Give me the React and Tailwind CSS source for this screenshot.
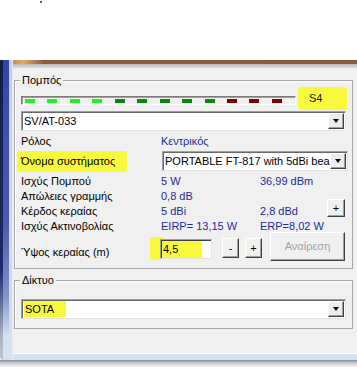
import React from 'react';

const dashColors = [
  'bg-[#22f022]', 'bg-[#22f022]', 'bg-[#22f022]', 'bg-[#22f022]',
  'bg-[#0b860b]', 'bg-[#0b860b]', 'bg-[#0b860b]', 'bg-[#0b860b]', 'bg-[#0b860b]',
  'bg-[#850000]', 'bg-[#850000]', 'bg-[#850000]',
];

const DropBtn = () => (
  <div className="w-[16px] h-[16px] shrink-0 bg-[#ededed] border border-t-white border-l-white border-b-[#404040] border-r-[#404040] shadow-[inset_-1px_-1px_0_#a0a0a0] flex items-center justify-center">
    <div className="w-0 h-0 border-l-[3.5px] border-r-[3.5px] border-t-[4px] border-l-transparent border-r-transparent border-t-black" />
  </div>
);

const Combo = ({ children, className = '' }) => (
  <div className={`h-[20px] bg-white border border-t-[#a0a0a0] border-l-[#a0a0a0] border-r-[#e3e3e3] border-b-[#e3e3e3] shadow-[inset_1px_1px_0_#696969] flex items-center pl-[2px] pr-[1px] ${className}`}>
    <div className="flex-1 min-w-0 overflow-hidden whitespace-nowrap h-[16px] flex items-center">{children}</div>
    <DropBtn />
  </div>
);

const Btn = ({ children, className = '' }) => (
  <div className={`bg-[#f0f0f0] border border-t-white border-l-white border-b-[#404040] border-r-[#404040] shadow-[inset_-1px_-1px_0_#a0a0a0] flex items-center justify-center ${className}`}>
    {children}
  </div>
);

const Row = ({ label, v1, v2, children, className = '' }) => (
  <div className={`flex items-start h-[15px] leading-[15px] ${className}`}>
    <div className="w-[140px] shrink-0">{label}</div>
    <div className="w-[99px] shrink-0 text-[#1c2a9c]">{v1}</div>
    <div className="text-[#1c2a9c]">{v2}</div>
    {children}
  </div>
);

const GroupLabel = ({ children }) => (
  <div className="absolute left-[5px] top-[-8px] px-[2px] bg-[#f0f0f0] leading-[15px]">{children}</div>
);

export default function App() {
  return (
    <div className="w-[357px] h-[367px] bg-white overflow-hidden font-['Liberation_Sans',Arial,sans-serif] text-[11px] text-black">
      <div className="h-[60px] relative">
        <div className="absolute left-[40px] top-[1px] w-[2px] h-[2px] bg-[#4a5aa8]" />
      </div>

      <div className="flex h-[300px]">
        <div className="w-[13px] shrink-0 flex">
          <div className="w-[3px] bg-[linear-gradient(to_bottom,#141c4a_0%,#1c2a6a_70%,#a8b4c2_92%,#c0c6cc_100%)] rounded-bl-[4px]" />
          <div className="w-[6px] bg-[linear-gradient(to_bottom,#3446a0_0%,#4a5cb0_55%,#7d92c8_78%,#d2e1f3_92%,#d2e1f3_100%)]" />
          <div className="w-[3px] bg-[linear-gradient(to_bottom,#c4ccd8_0%,#d8e0ea_100%)]" />
          <div className="w-[1px] bg-[#e8edf3]" />
        </div>

        <div className="flex-1 flex flex-col">
          <div className="h-[4px] bg-[linear-gradient(to_right,#c98a48_0%,#e3a865_3%,#8d5a3e_9%,#8b5a3c_100%)]" />
          <div className="h-[4px] bg-[linear-gradient(to_bottom,#b8b8b8,#dcdcdc)]" />

          <div className="flex-1 bg-[#f0f0f0] pl-[1px] pt-[12px]">
            {/* Πομπός */}
            <div className="relative w-[339px] h-[189px] border border-[#a8a8a8] shadow-[inset_1px_1px_0_#ffffff] pl-[6px] pr-[6px] pt-[6px]">
              <GroupLabel>Πομπός</GroupLabel>

              <div className="flex items-start h-[23px] gap-[2px]">
                <div className="w-[275px] h-[9px] mt-[9px] shrink-0 bg-[#f0f0f0] border border-t-[#7a7a7a] border-l-[#7a7a7a] border-b-white border-r-white shadow-[inset_1px_1px_0_#a0a0a0] flex items-center pl-[3px] gap-[12.45px]">
                  {dashColors.map((c, i) => (
                    <div key={i} className={`w-[10px] h-[4px] shrink-0 ${c}`} />
                  ))}
                </div>
                <div className="w-[49px] h-[23px] shrink-0 bg-[#f8f83c] rounded-[3px] pl-[11px] flex items-center text-[#10103a]">S4</div>
              </div>

              <Combo className="mt-[1px]">
                <span>SV/AT-033</span>
              </Combo>

              <Row label="Ρόλος" v1="Κεντρικός" className="mt-[3px]" />

              <div className="flex items-center h-[20px] mt-[2px]">
                <div className="w-[140px] shrink-0">
                  <span className="inline-block -ml-[4px] pl-[4px] pr-[12px] py-[3px] bg-[#f8f83c] rounded-[3px] leading-[15px]">Όνομα συστήματος</span>
                </div>
                <Combo className="flex-1 ml-[1px]">
                  <span>PORTABLE FT-817 with 5dBi bea</span>
                </Combo>
              </div>

              <Row label="Ισχύς Πομπού" v1="5 W" v2="36,99 dBm" className="mt-[3px]" />
              <Row label="Απώλειες γραμμής" v1="0,8 dB" />
              <Row label="Κέρδος κεραίας" v1="5 dBi" v2="2,8 dBd">
                <Btn className="ml-auto mr-[1px] mt-[-5px] w-[18px] h-[18px] shrink-0">+</Btn>
              </Row>
              <Row label="Ισχύς Ακτινοβολίας" v1="EIRP= 13,15 W" v2="ERP=8,02 W" />

              <div className="relative flex items-start h-[29px] mt-[-2px]">
                <div className="absolute left-[129px] top-[5px] w-[14px] h-[23px] bg-[#f8f83c] rounded-l-[3px]" />
                <div className="w-[139px] shrink-0 mt-[13px] leading-[15px]">Ύψος κεραίας (m)</div>
                <div className="relative w-[52px] h-[20px] mt-[7px] shrink-0 border border-t-[#a0a0a0] border-l-[#a0a0a0] border-r-[#e3e3e3] border-b-[#e3e3e3] shadow-[inset_1px_1px_0_#404040] bg-[linear-gradient(to_right,#f8f83c_0%,#f8f83c_82%,#ffffff_82%)] pl-[2px] flex items-center">4,5</div>
                <Btn className="w-[17px] h-[20px] mt-[6px] ml-[10px] shrink-0">-</Btn>
                <Btn className="w-[17px] h-[20px] mt-[6px] ml-[6px] shrink-0">+</Btn>
                <Btn className="w-[75px] h-[29px] ml-[8px] shrink-0 text-[#a3a3a3]">Αναίρεση</Btn>
              </div>
            </div>

            {/* Δίκτυο */}
            <div className="relative w-[339px] h-[49px] mt-[11px] border border-[#a8a8a8] shadow-[inset_1px_1px_0_#ffffff] pl-[6px] pr-[6px] pt-[18px]">
              <GroupLabel>Δίκτυο</GroupLabel>
              <Combo>
                <span className="h-[16px] leading-[16px] bg-[#f8f83c] pl-[1px] pr-[12px]">SOTA</span>
              </Combo>
            </div>
          </div>

          <div className="h-[7px] bg-[#d3e2f3] border-t border-t-white" />
        </div>
      </div>

      <div className="h-[7px] bg-[linear-gradient(to_bottom,#7f8c98_0%,#c4c8cc_40%,#f4f4f4_100%)]" />
    </div>
  );
}
